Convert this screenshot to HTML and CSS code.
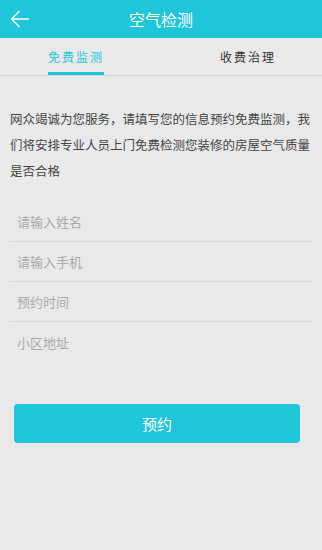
FILE: index.html
```html
<!DOCTYPE html>
<html lang="zh">
<head>
  <meta charset="UTF-8">
  <title>空气检测</title>
  <link rel="stylesheet" href="styles.css">
</head>
<body>

  <header class="topbar">
    <a href="#" class="back">
      <svg width="20" height="18" viewBox="0 0 20 18">
        <path d="M19 9H1.5M9.5 1L1.5 9l8 8" fill="none" stroke="#fff" stroke-width="1.4"/>
      </svg>
    </a>
    <h1>空气检测</h1>
  </header>

  <nav class="tabs">
    <a href="#" class="tab active"><span>免费监测</span></a>
    <a href="#" class="tab"><span>收费治理</span></a>
  </nav>

  <p class="intro">网众竭诚为您服务，请填写您的信息预约免费监测，我们将安排专业人员上门免费检测您装修的房屋空气质量是否合格</p>

  <form class="form">
    <input type="text" placeholder="请输入姓名">
    <input type="text" placeholder="请输入手机">
    <input type="text" placeholder="预约时间">
    <input type="text" placeholder="小区地址">
  </form>

  <button class="submit">预约</button>

</body>
</html>
```

FILE: styles.css
```css
* {
  margin: 0;
  padding: 0;
  box-sizing: border-box;
}
body {
  font-family: "Noto Sans CJK SC", "Liberation Sans", sans-serif;
  background-color: #e9e9e9;
  color: #444;
}
.topbar {
  position: relative;
  height: 38px;
  background-color: #1fc6d9;
  display: flex;
  align-items: center;
  justify-content: center;
}
.topbar h1 {
  font-size: 16px;
  font-weight: normal;
  color: #fff;
}
.back {
  position: absolute;
  left: 10px;
  top: 10px;
  display: flex;
}
.tabs {
  display: flex;
  justify-content: space-between;
  height: 38px;
  border-bottom: 1px solid #d6d6d6;
}
.tab {
  width: 150px;
  display: flex;
  justify-content: center;
  text-decoration: none;
  color: #333;
  font-size: 12px;
  letter-spacing: 2px;
}
.tab span {
  display: block;
  padding-top: 10px;
  height: 37px;
  margin-right: -2px;
}
.tab.active {
  color: #1fc6d9;
}
.tab.active span {
  border-bottom: 3px solid #1fc6d9;
}
.intro {
  padding: 30px 10px 0;
  font-size: 12.5px;
  line-height: 26px;
  color: #444;
}
.form {
  margin: 18px 10px 0 9px;
  display: flex;
  flex-direction: column;
}
.form input {
  height: 40px;
  border: none;
  border-bottom: 1px solid #d8d8d8;
  background: transparent;
  padding-left: 8px;
  font-family: inherit;
  font-size: 13px;
  color: #444;
  outline: none;
}
.form input:last-child {
  border-bottom: none;
}
.form input::placeholder {
  color: #aaa;
}
.submit {
  display: block;
  margin: 42px 0 0 14px;
  width: 286px;
  height: 39px;
  background-color: #1fc6d9;
  color: #fff;
  border: none;
  border-radius: 4px;
  font-family: inherit;
  font-size: 15px;
  cursor: pointer;
}
```
